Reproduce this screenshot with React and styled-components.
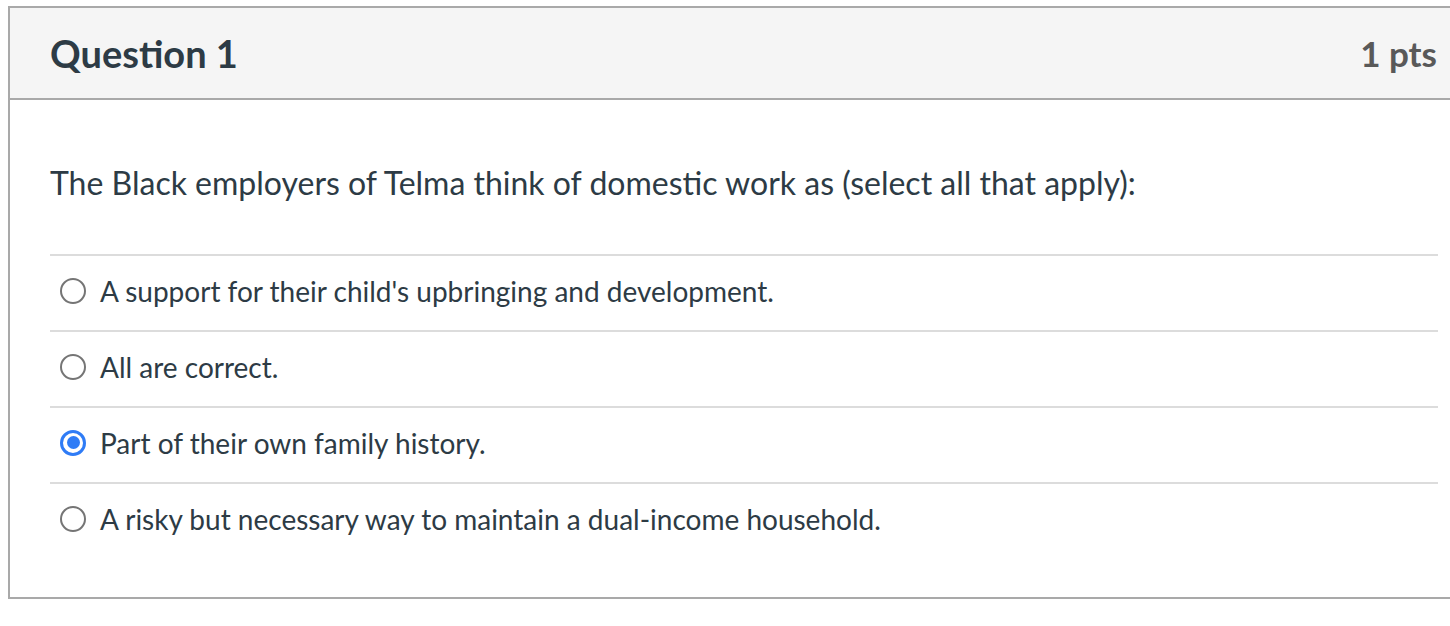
import React, { useState } from 'react';
import styled, { createGlobalStyle } from 'styled-components';

const GlobalStyle = createGlobalStyle`
  body {
    margin: 0;
    background: #fff;
    font-family: Lato, "Open Sans", sans-serif;
    overflow: hidden;
  }
`;

const answers = [
  "A support for their child's upbringing and development.",
  'All are correct.',
  'Part of their own family history.',
  'A risky but necessary way to maintain a dual-income household.',
];

const Card = styled.div`
  margin: 6px 0 0 8px;
  width: 1442px;
  border: 2px solid #a9a9a9;
  border-right: none;
  color: #2d3b45;
`;

const Header = styled.div`
  display: flex;
  align-items: center;
  justify-content: space-between;
  height: 90px;
  padding: 0 15px 0 40px;
  background: #f5f5f5;
  border-bottom: 2px solid #a9a9a9;
`;

const Title = styled.h2`
  margin: 0;
  font-size: 38px;
  font-weight: 700;
  color: #2d3b45;
`;

const Points = styled.div`
  font-size: 35px;
  font-weight: 700;
  color: #595959;
`;

const Body = styled.div`
  padding: 64px 14px 39px 40px;
`;

const QuestionText = styled.p`
  margin: 0 0 52px;
  font-size: 32px;
  line-height: 38px;
`;

const Answer = styled.label`
  display: flex;
  align-items: center;
  gap: 14px;
  box-sizing: border-box;
  height: 76px;
  padding: 0 0 5px 10px;
  border-top: 2px solid #dcdcdc;
  font-size: 28px;
  cursor: pointer;
`;

const Radio = styled.span`
  box-sizing: border-box;
  width: 26px;
  height: 26px;
  flex: none;
  border-radius: 50%;
  border: ${(p) => (p.$checked ? '3px solid #2f7cf6' : '2px solid #757575')};
  display: flex;
  align-items: center;
  justify-content: center;
  &::after {
    content: '';
    width: 13px;
    height: 13px;
    border-radius: 50%;
    background: ${(p) => (p.$checked ? '#2f7cf6' : 'transparent')};
  }
`;

export default function App() {
  const [selected, setSelected] = useState(2);
  return (
    <>
      <GlobalStyle />
      <Card>
        <Header>
          <Title>Question 1</Title>
          <Points>1 pts</Points>
        </Header>
        <Body>
          <QuestionText>
            The Black employers of Telma think of domestic work as (select all that apply):
          </QuestionText>
          {answers.map((a, i) => (
            <Answer key={i} onClick={() => setSelected(i)}>
              <Radio $checked={selected === i} />
              {a}
            </Answer>
          ))}
        </Body>
      </Card>
    </>
  );
}
